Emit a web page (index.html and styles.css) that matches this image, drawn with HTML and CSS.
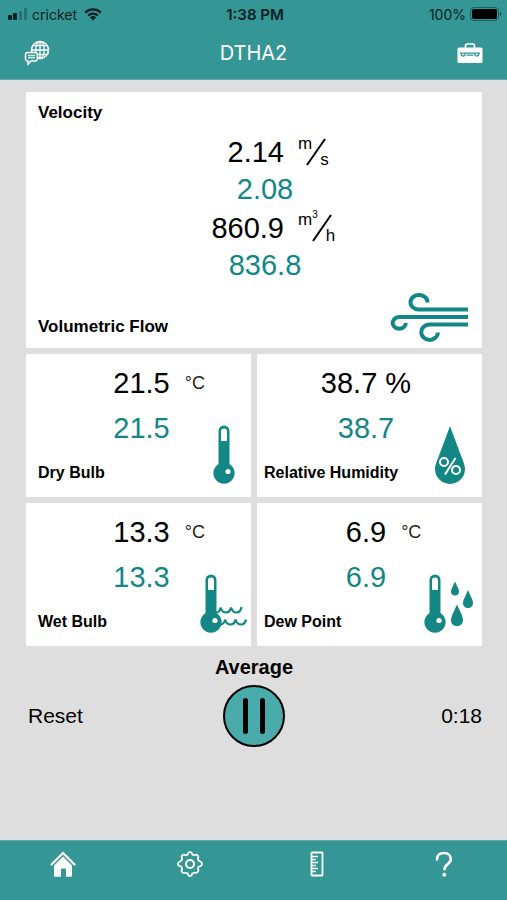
FILE: index.html
```html
<!DOCTYPE html>
<html lang="en">
<head>
    <meta charset="UTF-8">
    <meta name="viewport" content="width=device-width, initial-scale=1.0">
    <title>DTHA2</title>
    <link rel="stylesheet" href="styles.css">
</head>
<body>

    <header class="top">
        <!-- Status Bar -->
        <div class="status-bar">
            <div class="carrier">
                <svg width="20" height="12" viewBox="0 0 20 12">
                    <rect x="0" y="7" width="4" height="5" rx="1" fill="#04201f"/>
                    <rect x="5" y="5" width="4" height="7" rx="1" fill="#04201f"/>
                    <rect x="11" y="3" width="3" height="9" rx="1" fill="#277373"/>
                    <rect x="16" y="0" width="3" height="12" rx="1" fill="#277373"/>
                </svg>
                <span>cricket</span>
                <svg class="wifi" width="18" height="13" viewBox="0 0 18 13">
                    <path d="M1.2 4.6a11.2 11.2 0 0 1 15.6 0M4.2 7.6a7 7 0 0 1 9.6 0" fill="none" stroke="#04201f" stroke-width="2.3"/>
                    <path d="M6 9.4a4.4 4.4 0 0 1 6 0L9 12.6z" fill="#04201f"/>
                </svg>
            </div>
            <span class="clock">1:38 PM</span>
            <div class="battery">
                <span>100%</span>
                <svg width="32" height="14" viewBox="0 0 32 14">
                    <rect x="0.5" y="0.5" width="28" height="13" rx="3.5" fill="none" stroke="#17605f"/>
                    <rect x="2" y="2" width="25" height="10" rx="2" fill="#000"/>
                    <path d="M30 5v4q1.6-.6 1.6-2T30 5z" fill="#17605f"/>
                </svg>
            </div>
        </div>

        <!-- Title Bar -->
        <div class="title-bar">
            <button class="icon-btn" aria-label="Language">
                <svg width="26" height="26" viewBox="0 0 26 26" fill="none" stroke="#fff">
                    <circle cx="16" cy="10" r="8.5" stroke-width="1.6"/>
                    <ellipse cx="16" cy="10" rx="4.2" ry="8.5" stroke-width="1.3"/>
                    <path d="M16 1.500v17M7.500 10h17M9 5.500h14M9 14.500h14" stroke-width="1.3"/>
                    <path d="M3.500 12.500h7.500a2.300 2.300 0 0 1 2.300 2.300v3.900a2.300 2.300 0 0 1-2.300 2.300H7l-3 3.200V21a2.500 2.500 0 0 1-2.500-2.300v-3.900a2.300 2.300 0 0 1 2-2.300z" fill="#359696" stroke-width="1.5"/>
                    <path d="M4 15.500h7M4 17.800h7" stroke-width="1.6" opacity="0.8"/>
                </svg>
            </button>
            <h1>DTHA2</h1>
            <button class="icon-btn" aria-label="Toolbox">
                <svg width="26" height="20" viewBox="0 0 26 20">
                    <path d="M8.500 5V2.800Q8.500 1 10.300 1h5.400q1.800 0 1.800 1.800V5" fill="none" stroke="#fff" stroke-width="1.7"/>
                    <rect x="0.500" y="4.500" width="25" height="15.500" rx="1.600" fill="#fff"/>
                    <path d="M3 10.200h20M9.500 12.200h7M4.200 10.200v1q0 1.800 1.800 1.800h.4q1.800 0 1.800-1.800v-1M17.800 10.200v1q0 1.800 1.800 1.800h.4q1.800 0 1.800-1.800v-1" fill="none" stroke="#359696" stroke-width="1.3"/>
                </svg>
            </button>
        </div>
    </header>

    <main>
        <div class="cards">
            <section class="card card-wide">
                <h2>Velocity</h2>
                <div class="flow">
                    <div class="flow-reading">
                        <span class="value">2.14</span>
                        <span class="fraction">
                            <span class="over">m</span>
                            <svg class="slash" width="20" height="28" viewBox="0 0 20 28"><path d="M1 27L19 1" stroke="#000" stroke-width="2"/></svg>
                            <span class="under">s</span>
                        </span>
                        <span class="average">2.08</span>
                    </div>
                    <div class="flow-reading">
                        <span class="value">860.9</span>
                        <span class="fraction">
                            <span class="over">m<sup>3</sup></span>
                            <svg class="slash" width="20" height="28" viewBox="0 0 20 28"><path d="M1 27L19 1" stroke="#000" stroke-width="2"/></svg>
                            <span class="under">h</span>
                        </span>
                        <span class="average">836.8</span>
                    </div>
                </div>
                <div class="card-foot">
                    <h2>Volumetric Flow</h2>
                    <svg class="wind" width="78" height="52" viewBox="0 0 78 52" fill="none" stroke="#138686" stroke-width="4">
                        <path d="M78 17.500H28.500A8.500 7.300 0 1 1 37.500 10.500"/>
                        <path d="M78 25H10A6.600 5.900 0 1 0 15.800 31"/>
                        <path d="M78 32.500H39.500A8.400 7.700 0 1 0 48 40.500"/>
                    </svg>
                </div>
            </section>

            <section class="card left">
                <div class="reading">
                    <span class="value">21.5</span>
                    <span class="unit">°C</span>
                    <span class="average">21.5</span>
                </div>
                <div class="card-foot">
                    <h2>Dry Bulb</h2>
                    <svg class="dry" width="22" height="60" viewBox="0 0 22 60">
                        <path d="M5.500 39V6a5.500 5.500 0 0 1 11 0v33a10.600 10.600 0 1 1-11 0z" fill="#138686"/>
                        <path d="M8 16V6.500a3 3 0 0 1 6 0V16z" fill="#fff"/>
                        <circle cx="15" cy="46.500" r="2.600" fill="#fff"/>
                    </svg>
                </div>
            </section>

            <section class="card right">
                <div class="reading">
                    <span class="value">38.7 %</span>
                    <span class="average">38.7</span>
                </div>
                <div class="card-foot">
                    <h2>Relative Humidity</h2>
                    <svg class="humidity" width="32" height="60" viewBox="0 0 32 60">
                        <path d="M16 1L27.500 32C30 38 31 41 31 44a15 15 0 0 1-30 0C1 41 2 38 4.500 32z" fill="#138686"/>
                        <g fill="none" stroke="#fff" stroke-width="2">
                            <circle cx="10" cy="37" r="4"/>
                            <circle cx="22" cy="45" r="4"/>
                            <path d="M21.500 33L11 49.500"/>
                        </g>
                    </svg>
                </div>
            </section>

            <section class="card left">
                <div class="reading">
                    <span class="value">13.3</span>
                    <span class="unit">°C</span>
                    <span class="average">13.3</span>
                </div>
                <div class="card-foot">
                    <h2>Wet Bulb</h2>
                    <svg class="wet" width="48" height="60" viewBox="0 0 48 60">
                        <path d="M5.500 39V6a5.500 5.500 0 0 1 11 0v33a10.600 10.600 0 1 1-11 0z" fill="#138686"/>
                        <path d="M8 16V6.500a3 3 0 0 1 6 0V16z" fill="#fff"/>
                        <circle cx="15" cy="46.500" r="2.600" fill="#fff"/>
                        <path d="M16 38.500q4 0 4.500-5q1.500 5 5.500 5t5-5q1.500 5 5.500 5t5-5.500M20 50.500q4.500 0 5-5q1.500 5 5.500 5t5-5q1.500 5 5.500 5t5-5" fill="none" stroke="#138686" stroke-width="2.200"/>
                    </svg>
                </div>
            </section>

            <section class="card right">
                <div class="reading">
                    <span class="value">6.9</span>
                    <span class="unit">°C</span>
                    <span class="average">6.9</span>
                </div>
                <div class="card-foot">
                    <h2>Dew Point</h2>
                    <svg class="dew" width="50" height="60" viewBox="0 0 50 60">
                        <path d="M5.500 39V6a5.500 5.500 0 0 1 11 0v33a10.600 10.600 0 1 1-11 0z" fill="#138686"/>
                        <path d="M8 16V6.500a3 3 0 0 1 6 0V16z" fill="#fff"/>
                        <circle cx="15" cy="46.500" r="2.600" fill="#fff"/>
                        <g fill="#138686">
                            <path d="M31 7.500l3.200 7q.8 1.600.8 3a4 4 0 0 1-8 0q0-1.400.8-3z"/>
                            <path d="M44 16l4 9q1 2 1 4.200a5 5 0 0 1-10 0q0-2.200 1-4.200z"/>
                            <path d="M33 30.500l4.800 10.500q1.200 2.800 1.200 5.200a6 6 0 0 1-12 0q0-2.400 1.200-5.200z"/>
                        </g>
                    </svg>
                </div>
            </section>
        </div>

        <!-- Average Controls -->
        <h2 class="average-title">Average</h2>
        <div class="controls">
            <button class="reset-btn">Reset</button>
            <button class="pause-btn" aria-label="Pause">
                <svg width="24" height="38" viewBox="0 0 24 38"><path d="M3.500 3.500v31M20.500 3.500v31" stroke="#000" stroke-width="5" stroke-linecap="round"/></svg>
            </button>
            <span class="timer">0:18</span>
        </div>
    </main>

    <!-- Tab Bar -->
    <nav class="tab-bar">
        <a href="#home" aria-label="Home">
            <svg width="26" height="26" viewBox="0 0 26 26">
                <path d="M1.500 13.500L13 2l11.500 11.500" fill="none" stroke="#fff" stroke-width="2.200" stroke-linecap="round"/>
                <path d="M13 5.500l9 9V25q0 .8-.8.800H16v-7.500q0-.8-.8-.8h-3.400q-.8 0-.8.800v7.500H4.800q-.8 0-.8-.8V14.500z" fill="#fff"/>
            </svg>
        </a>
        <a href="#settings" aria-label="Settings">
            <svg width="26" height="26" viewBox="0 0 26 26" fill="none" stroke="#fff" stroke-width="1.700" stroke-linejoin="round">
                <path d="M10.700 3.600Q11 1 13 1t2.300 2.600q1 .3 1.800.8 2-1.500 3.500-.1t.2 3.600q.5.900.8 1.900Q25 10.800 25 13t-3.400 2.600q-.3 1-.8 1.900 1.400 2-.1 3.500t-3.600.6q-.8.500-1.800.8Q15 25 13 25t-2.300-2.600q-1-.3-1.800-.8-2 1.300-3.500-.1t-.2-3.900q-.5-.9-.8-1.900Q1 15.200 1 13t3.400-3.200q.3-1 .8-1.900-1.400-2 .1-3.500t3.600 0q.8-.5 1.800-.8z"/>
                <circle cx="13" cy="13" r="4" stroke-width="2"/>
            </svg>
        </a>
        <a href="#units" aria-label="Units">
            <svg width="14" height="26" viewBox="0 0 14 26" fill="none" stroke="#fff">
                <rect x="1.500" y="1.500" width="11" height="23" rx="0.500" stroke-width="1.800"/>
                <path d="M2 5.500h6M2 8.500h4M2 11.500h6M2 14.500h4M2 17.500h6M2 20.500h4" stroke-width="1.400"/>
            </svg>
        </a>
        <a href="#help" aria-label="Help">
            <svg width="18" height="26" viewBox="0 0 18 26">
                <path d="M2 8.500C2 4 5 2 9 2s6.800 2.500 6.800 6.300c0 5-6.300 4.700-6.300 10" fill="none" stroke="#fff" stroke-width="2.600" stroke-linecap="round"/>
                <circle cx="9.300" cy="23.700" r="2" fill="#fff"/>
            </svg>
        </a>
    </nav>

</body>
</html>
```
FILE: styles.css
```css
* {
    margin: 0;
    padding: 0;
    box-sizing: border-box;
}

body {
    font-family: 'Liberation Sans', Arial, sans-serif;
    background-color: #dedede;
    color: #000;
    min-height: 100vh;
    display: flex;
    flex-direction: column;
}

svg {
    display: block;
}

button {
    background: none;
    border: none;
    font-family: inherit;
    color: inherit;
    cursor: pointer;
}

.top {
    background-color: #359696;
    border-bottom: 1px solid #5fa9a9;
}

.status-bar {
    display: grid;
    grid-template-columns: 1fr auto 1fr;
    align-items: center;
    height: 28px;
    padding: 0 5px 0 8px;
    font-family: Inter, sans-serif;
    font-size: 14px;
    color: #04201f;
}

.carrier, .battery {
    display: flex;
    align-items: center;
    gap: 4px;
}

.wifi {
    margin-left: 3px;
}

.battery {
    justify-content: flex-end;
}

.clock {
    font-size: 15px;
    font-weight: 600;
}

.title-bar {
    display: flex;
    justify-content: space-between;
    align-items: center;
    height: 51px;
    padding: 0 24px;
    padding-bottom: 2px;
}

.title-bar h1 {
    font-family: Inter, sans-serif;
    font-size: 20px;
    font-weight: 400;
    color: #fff;
}

main {
    flex: 1;
    padding: 12px 25px 12px 26px;
}

/* Cards */
.cards {
    display: grid;
    grid-template-columns: 1fr 1fr;
    gap: 6px;
}

.card {
    position: relative;
    display: flex;
    flex-direction: column;
    justify-content: space-between;
    background-color: #fff;
    min-height: 143px;
    padding: 11px 12px 14px;
}

.card.right {
    padding-left: 7px;
}

.card-wide {
    grid-column: 1 / -1;
    min-height: 256px;
    padding-bottom: 11px;
}

.card h2 {
    font-size: 16px;
    line-height: 20px;
}

.card-wide h2 {
    font-size: 17px;
}

/* Icons lie over the lower right corner of the card */
.card-foot svg {
    position: absolute;
    right: 16px;
    bottom: 12px;
}

.card-foot .wind {
    right: 14px;
    bottom: 4px;
}

.card-foot .wet {
    right: 3px;
}

.card-foot .dew {
    right: 8px;
}

.value, .average {
    font-size: 29px;
    line-height: 36px;
}

.average {
    color: #138686;
}

.flow {
    display: flex;
    flex-direction: column;
    align-items: center;
    gap: 3px;
    margin-bottom: 24px;
    padding-left: 34px;
}

.flow-reading {
    display: grid;
    grid-template-columns: 74px 34px;
    gap: 1px 14px;
}

.flow-reading .value {
    text-align: right;
}

.flow-reading .average {
    grid-column: 1 / -1;
    text-align: center;
    padding-right: 12px;
}

.fraction {
    display: flex;
    align-items: center;
    font-size: 17px;
    line-height: 20px;
}

.over {
    align-self: flex-start;
}

.over sup {
    font-size: 10px;
    line-height: 10px;
}

.slash {
    flex-shrink: 0;
    margin: 0 -6px;
}

.under {
    align-self: flex-end;
}

.reading {
    display: grid;
    grid-template-columns: 1fr auto 1fr;
    align-items: center;
    row-gap: 9px;
}

.left .reading {
    padding-left: 6px;
}

.right .reading {
    padding-right: 2px;
}

.reading .value, .reading .average {
    grid-column: 2;
    text-align: center;
}

.unit {
    padding-left: 15px;
    font-size: 18px;
    color: #222;
}

/* Average Controls */
.average-title {
    margin-top: 9px;
    font-size: 20px;
    line-height: 24px;
    text-align: center;
}

.controls {
    display: grid;
    grid-template-columns: 1fr auto 1fr;
    align-items: center;
    margin-top: 6px;
    font-size: 21px;
}

.reset-btn {
    justify-self: start;
    padding-left: 2px;
    font-size: 21px;
}

.pause-btn {
    display: flex;
    justify-content: center;
    align-items: center;
    width: 62px;
    height: 62px;
    border: 2px solid #000;
    border-radius: 50%;
    background-color: #4aabab;
}

.timer {
    justify-self: end;
}

/* Tab Bar */
.tab-bar {
    display: grid;
    grid-template-columns: repeat(4, 1fr);
    height: 60px;
    background-color: #359696;
    border-top: 1px solid #5fa9a9;
}

.tab-bar a {
    display: flex;
    justify-content: center;
    padding-top: 10px;
}
```
